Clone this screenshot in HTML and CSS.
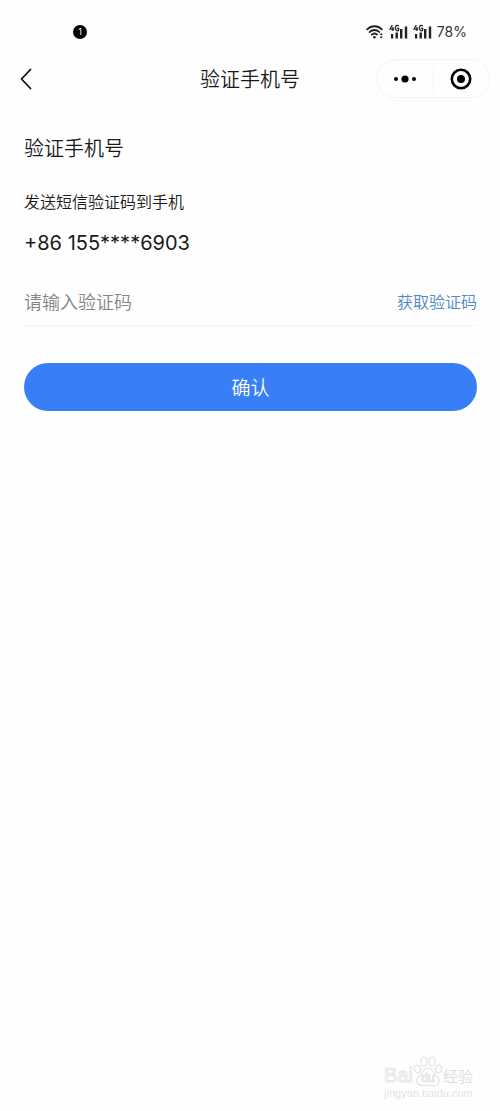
FILE: index.html
```html
<!DOCTYPE html>
<html lang="zh-CN">
<head>
<meta charset="utf-8">
<meta name="viewport" content="width=device-width, initial-scale=1">
<title>验证手机号</title>
<link rel="stylesheet" href="styles.css">
</head>
<body>
<div class="status">
  <span class="status-badge">1</span>
  <div class="status-icons">
    <svg class="wifi" width="18" height="14" viewBox="0 0 18 14" fill="none" stroke="#222" stroke-width="1.8" stroke-linecap="round">
      <path d="M1.200 4.400C5.200 .2 11.800 .2 15.800 4.400M3.500 7.100C6.300 4.300 10.700 4.300 13.300 7M5.800 9.700C7.400 8.200 9.500 8.200 11 9.600"/>
      <circle cx="8.400" cy="12.200" r="1.300" fill="#222" stroke="none"/>
      <path d="M13.500 10l1.700-2 1.700 2zM13.500 11.500l1.700 2 1.700-2z" fill="#222" stroke="none"/>
    </svg>
    <svg class="signal" width="19" height="16" viewBox="0 0 19 16" fill="#222">
      <g fill="none" stroke="#222" stroke-width="1.300"><path d="M3.400 1L1 5.200h4.200M3.900 3v4M9.600 2.300C9 .8 6.400 .9 6.400 4S9 7.200 9.600 5.900V4.400H8"/></g>
      <rect x="2" y="10" width="2.200" height="4.500"/><rect x="6.500" y="8.500" width="2.400" height="6"/><rect x="11" y="5" width="2.400" height="9.500"/><rect x="15.800" y="2.500" width="2.400" height="12"/>
    </svg>
    <svg class="signal" width="19" height="16" viewBox="0 0 19 16" fill="#222">
      <g fill="none" stroke="#222" stroke-width="1.300"><path d="M3.400 1L1 5.200h4.200M3.900 3v4M9.600 2.300C9 .8 6.400 .9 6.400 4S9 7.200 9.600 5.900V4.400H8"/></g>
      <rect x="2" y="10" width="2.200" height="4.500"/><rect x="6.500" y="8.500" width="2.400" height="6"/><rect x="11" y="5" width="2.400" height="9.500"/><rect x="15.800" y="2.500" width="2.400" height="12"/>
    </svg>
    <span class="battery">78%</span>
  </div>
</div>
<header class="nav">
  <button class="back" type="button" aria-label="返回">
    <svg width="12" height="22" viewBox="0 0 12 22" fill="none" stroke="#111" stroke-width="1.800" stroke-linecap="round" stroke-linejoin="round"><path d="M10.500 1.500L1.500 11l9 9.500"/></svg>
  </button>
  <h1 class="nav-title">验证手机号</h1>
  <div class="capsule">
    <button class="capsule-button" type="button" aria-label="更多">
      <svg width="24" height="10" viewBox="0 0 24 10"><circle cx="3" cy="5" r="2"/><circle cx="12" cy="5" r="3.600"/><circle cx="21" cy="5" r="2"/></svg>
    </button>
    <button class="capsule-button" type="button" aria-label="关闭">
      <svg width="22" height="22" viewBox="0 0 22 22"><circle cx="11" cy="11" r="9.200" fill="none" stroke="#000" stroke-width="2.600"/><circle cx="11" cy="11" r="4"/></svg>
    </button>
  </div>
</header>
<main class="content">
  <h2 class="heading">验证手机号</h2>
  <p class="hint">发送短信验证码到手机</p>
  <p class="phone">+86 155****6903</p>
  <form class="form">
    <div class="field">
      <input class="code" type="text" inputmode="numeric" aria-label="验证码" placeholder="请输入验证码">
      <button class="get-code" type="button">获取验证码</button>
    </div>
    <button class="confirm" type="submit">确认</button>
  </form>
</main>
<footer class="watermark">
  <div class="brand">
    <span class="brand-latin">Bai</span>
    <span class="paw">
      <svg width="30" height="31" viewBox="0 0 30 31" fill="#fff" stroke="#e2e2e2" stroke-width="1.200">
        <ellipse cx="4.500" cy="13" rx="3" ry="4" transform="rotate(-15 4.500 13)"/><ellipse cx="11" cy="5.500" rx="3" ry="4.500"/><ellipse cx="19" cy="5.500" rx="3" ry="4.500" transform="rotate(10 19 5.500)"/><ellipse cx="25.500" cy="13" rx="3" ry="4" transform="rotate(12 25.500 13)"/>
        <path d="M15 12c-5 0-5 5-8.500 8-5 4-2 10 3 9.500 3-.500 8-.500 11 0 5 .500 8-5 3-9.500-3.500-3-3.500-8-8.500-8z"/>
      </svg>
      <span class="paw-text">du</span>
    </span>
    <span class="brand-cn">经验</span>
  </div>
  <div class="site">jingyan.baidu.com</div>
</footer>
</body>
</html>
```

FILE: styles.css
```css
* { box-sizing: border-box; }

body {
  margin: 0;
  min-height: 100vh;
  display: flex;
  flex-direction: column;
  background: #fefefe;
  color: #1a1a1a;
  font-family: "Noto Sans CJK SC", sans-serif;
  font-weight: 350;
}

h1, h2, p { margin: 0; font-weight: 350; }

button {
  padding: 0;
  border: 0;
  background: none;
  font: inherit;
  color: inherit;
}

.status {
  display: flex;
  justify-content: space-between;
  align-items: center;
  padding: 20px 33px 0 73px;
}

.status-badge {
  width: 14px;
  height: 14px;
  border-radius: 50%;
  background: #000;
  color: #fff;
  font: 9px/14px Inter, sans-serif;
  text-align: center;
}

.status-icons { display: flex; align-items: center; gap: 5px; }

.battery { font: 14px/24px Inter, sans-serif; color: #333; }

.nav {
  display: grid;
  grid-template-columns: 1fr auto 1fr;
  align-items: center;
  margin-top: 15px;
  padding: 0 10px;
}

.back { justify-self: start; display: flex; padding: 0 10px; }

.nav-title { font-size: 20px; line-height: 30px; }

.capsule {
  justify-self: end;
  display: flex;
  align-items: center;
  width: 114px;
  height: 39px;
  border: 1px solid #f4f4f4;
  border-radius: 20px;
}

.capsule-button {
  flex: 1;
  height: 26px;
  display: flex;
  align-items: center;
  justify-content: center;
}

.capsule-button + .capsule-button { border-left: 1px solid #f4f4f4; }

.content { flex: 1; padding: 35px 23px 0 24px; }

.heading { font-size: 20px; line-height: 30px; }

.hint { margin-top: 26px; font-size: 16px; line-height: 24px; }

.phone {
  margin-top: 16px;
  font: 20px/28px Inter, sans-serif;
}

.field {
  display: flex;
  align-items: center;
  justify-content: space-between;
  margin-top: 22px;
  padding-bottom: 2px;
  height: 47px;
  border-bottom: 1px solid #f3f3f3;
}

.code {
  flex: 1;
  min-width: 0;
  padding: 0;
  border: 0;
  outline: 0;
  background: none;
  font: 350 18px/26px "Noto Sans CJK SC", sans-serif;
}

.code::placeholder { color: #858585; opacity: 1; }

.get-code { font-size: 16px; line-height: 24px; color: #5088c8; }

.confirm {
  width: 100%;
  height: 48px;
  margin-top: 37px;
  padding-bottom: 2px;
  border-radius: 24px;
  background: #377ef7;
  color: #fff;
  font-size: 19px;
}

.watermark {
  align-self: flex-end;
  padding: 0 27px 12px 0;
  color: #fff;
  -webkit-text-stroke: 1px #e6e6e6;
}

.brand { display: flex; align-items: flex-end; }

.brand-latin { font: 20px/24px "Liberation Sans", sans-serif; }

.paw { display: grid; place-items: end center; }

.paw svg, .paw-text { grid-area: 1 / 1; }

.paw-text { font: 12px/18px "Liberation Sans", sans-serif; }

.brand-cn {
  font-size: 15px;
  line-height: 22px;
  color: #dcdcdc;
  -webkit-text-stroke: 0;
}

.site {
  font: 11px/12px "Liberation Sans", sans-serif;
  color: #e4e4e4;
  -webkit-text-stroke: 0;
}
```
